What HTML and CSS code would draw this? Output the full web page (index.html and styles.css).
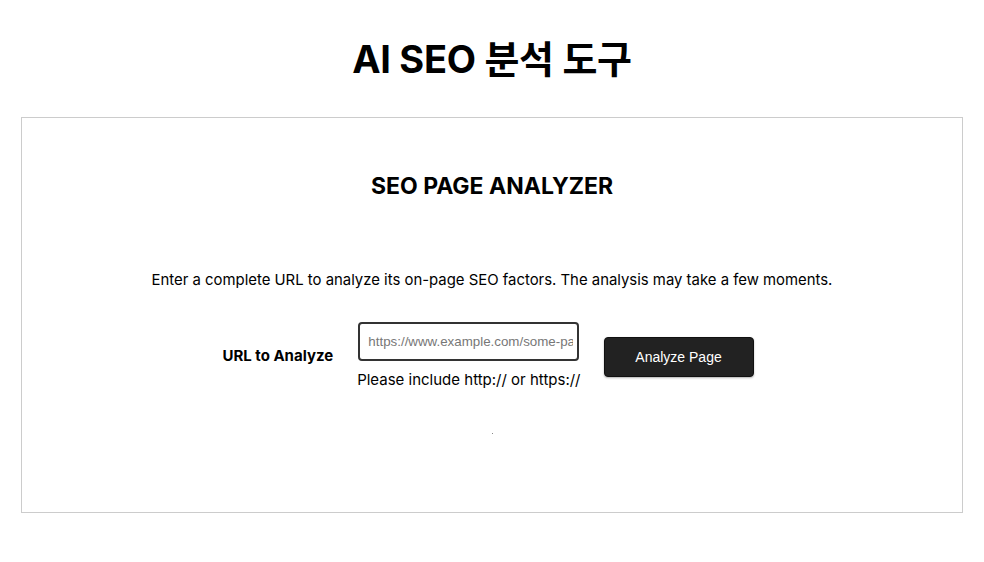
FILE: index.html
```html
<html lang="ko">
  <head>
    <meta charset="UTF-8" />
    <meta name="viewport" content="width=device-width, initial-scale=1.0" />
    <title>AI SEO 분석 도구</title>
    <link rel="stylesheet" href="styles.css">
  </head>
  <body>
    <!-- Header -->
    <header class="header">
      <h1>AI SEO 분석 도구</h1>
    </header>

    <!-- Analyzer card -->
    <main class="card">
      <h2>SEO PAGE ANALYZER</h2>
      <p class="intro">Enter a complete URL to analyze its on-page SEO factors. The analysis may take a few moments.</p>

      <form class="url-form">
        <label for="url">URL to Analyze</label>
        <div class="field">
          <input type="text" id="url" name="url" placeholder="https://www.example.com/some-page" />
          <span class="hint">Please include http:// or https://</span>
        </div>
        <button type="submit">Analyze Page</button>
      </form>

      <div class="result"></div>
    </main>
  </body>
</html>
```

FILE: styles.css
```css
body {
  margin: 0;
  padding: 0 21px;
  font-family: Inter, "Noto Sans CJK KR", sans-serif;
  color: #000;
  background: #fff;
}
.header {
  text-align: center;
  padding-top: 35px;
  height: 117px;
  box-sizing: border-box;
}
.header h1 {
  margin: 0;
  font-size: 38px;
  font-weight: 700;
  line-height: 48px;
  letter-spacing: -0.3px;
}
.card {
  border: 1px solid #ccc;
  height: 396px;
  box-sizing: border-box;
  padding-top: 54px;
  text-align: center;
}
.card h2 {
  margin: 0;
  font-size: 23px;
  font-weight: 700;
  line-height: 28px;
}
.intro {
  margin: 69px 0 0;
  font-size: 14.9px;
  line-height: 22px;
}
.url-form {
  display: flex;
  justify-content: center;
  align-items: center;
  margin-top: 31px;
  padding-right: 8px;
}
.url-form label {
  font-weight: 700;
  font-size: 15px;
  margin: 0 24px 2px 0;
}
.field {
  display: flex;
  flex-direction: column;
  align-items: center;
}
.field input {
  width: 221px;
  height: 39px;
  box-sizing: border-box;
  border: 2px solid #333;
  border-radius: 4px;
  padding: 0 4px 0 8px;
  font-family: "Liberation Sans", Arial, sans-serif;
  font-size: 13.33px;
}
.field input::placeholder {
  color: #777;
}
.hint {
  font-size: 15px;
  line-height: 22px;
  margin-top: 8px;
}
.url-form button {
  width: 150px;
  height: 40px;
  margin: 0 0 0 23px;
  background-color: #222;
  color: #fff;
  border: 1px solid #111;
  border-radius: 4px;
  box-shadow: 0 1px 2px rgba(0, 0, 0, 0.3);
  font-family: "Liberation Sans", Arial, sans-serif;
  font-size: 14px;
  cursor: pointer;
}
.result {
  width: 1px;
  height: 1px;
  margin: 42px auto 0;
  background: #888;
}
```
